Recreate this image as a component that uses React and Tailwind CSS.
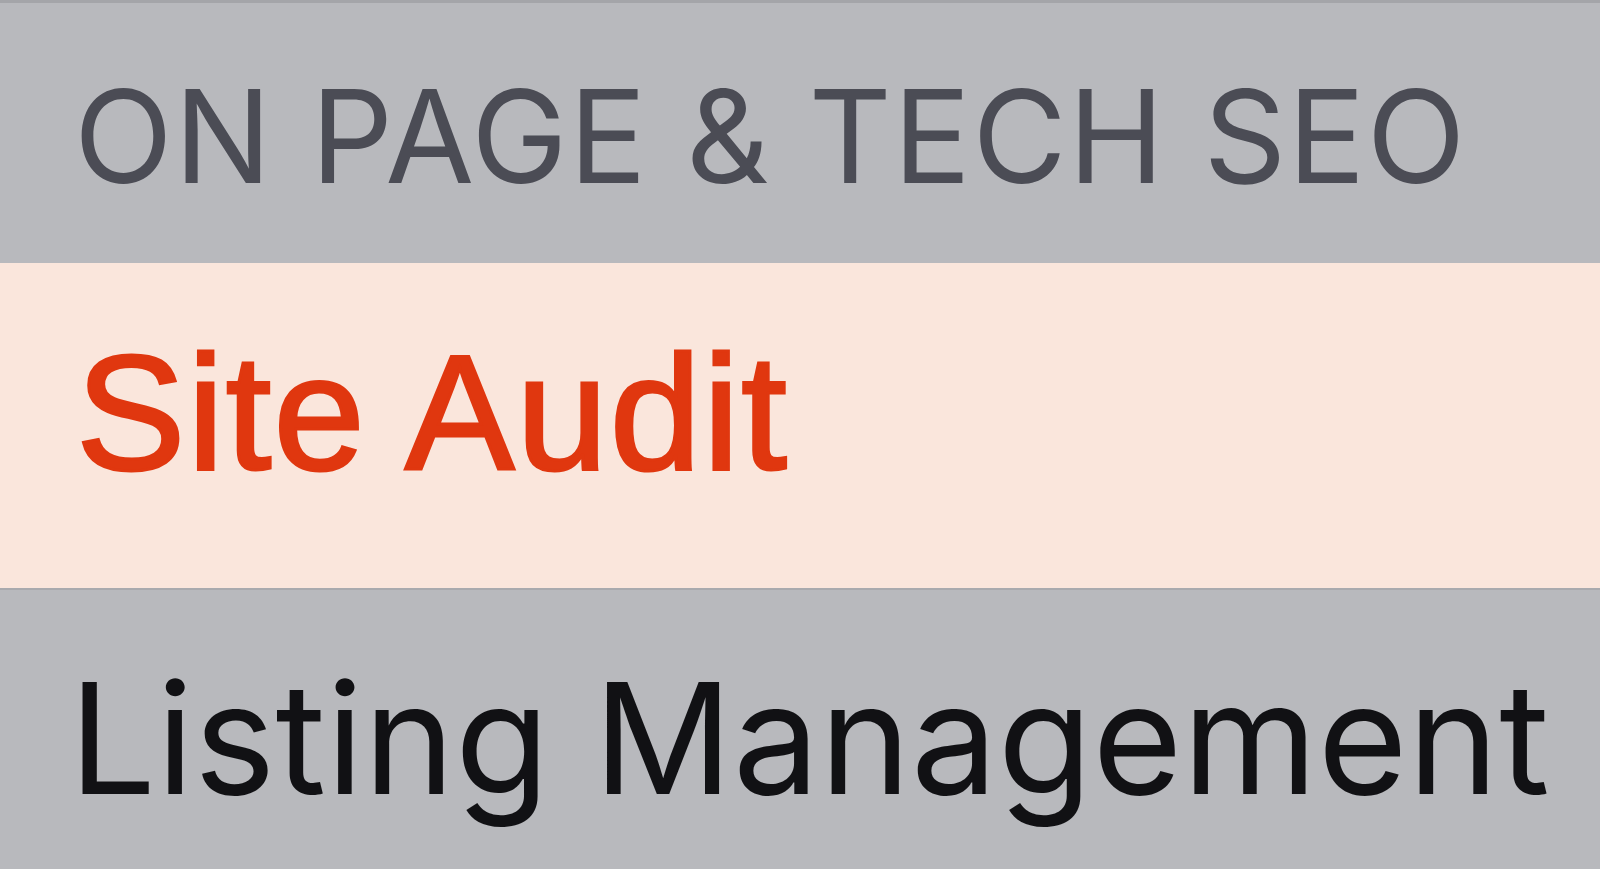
export default function App() {
    return (
        <div className="w-[1600px] h-[869px] overflow-hidden bg-[#b8b9bd] flex flex-col">
            <div className="h-[3px] bg-[#a4a5a9]" />
            <div className="h-[260px] flex items-center pl-[74px]">
                <span
                    className="text-[129px] leading-none text-[#4b4c55] tracking-[0.012em] pt-[6px]"
                    style={{ fontFamily: "Inter, 'Noto Sans', sans-serif" }}
                >
                    ON PAGE &amp; TECH SEO
                </span>
            </div>
            <div className="h-[325px] bg-[#fae6dc] flex items-center pl-[76px] pb-[26px]">
                <span
                    className="text-[164px] leading-none text-[#e0370f] tracking-[2px] [-webkit-text-stroke:3px_#e0370f]"
                    style={{ fontFamily: "'Liberation Sans', Arial, sans-serif" }}
                >
                    Site Audit
                </span>
            </div>
            <div className="h-[2px] bg-[#a9aaae]" />
            <div className="flex-1 flex items-start pl-[69px] pt-[71px]">
                <span
                    className="text-[154px] leading-none text-[#111114] tracking-[0.3px]"
                    style={{ fontFamily: "Inter, 'Noto Sans', sans-serif" }}
                >
                    Listing Management
                </span>
            </div>
        </div>
    );
}
